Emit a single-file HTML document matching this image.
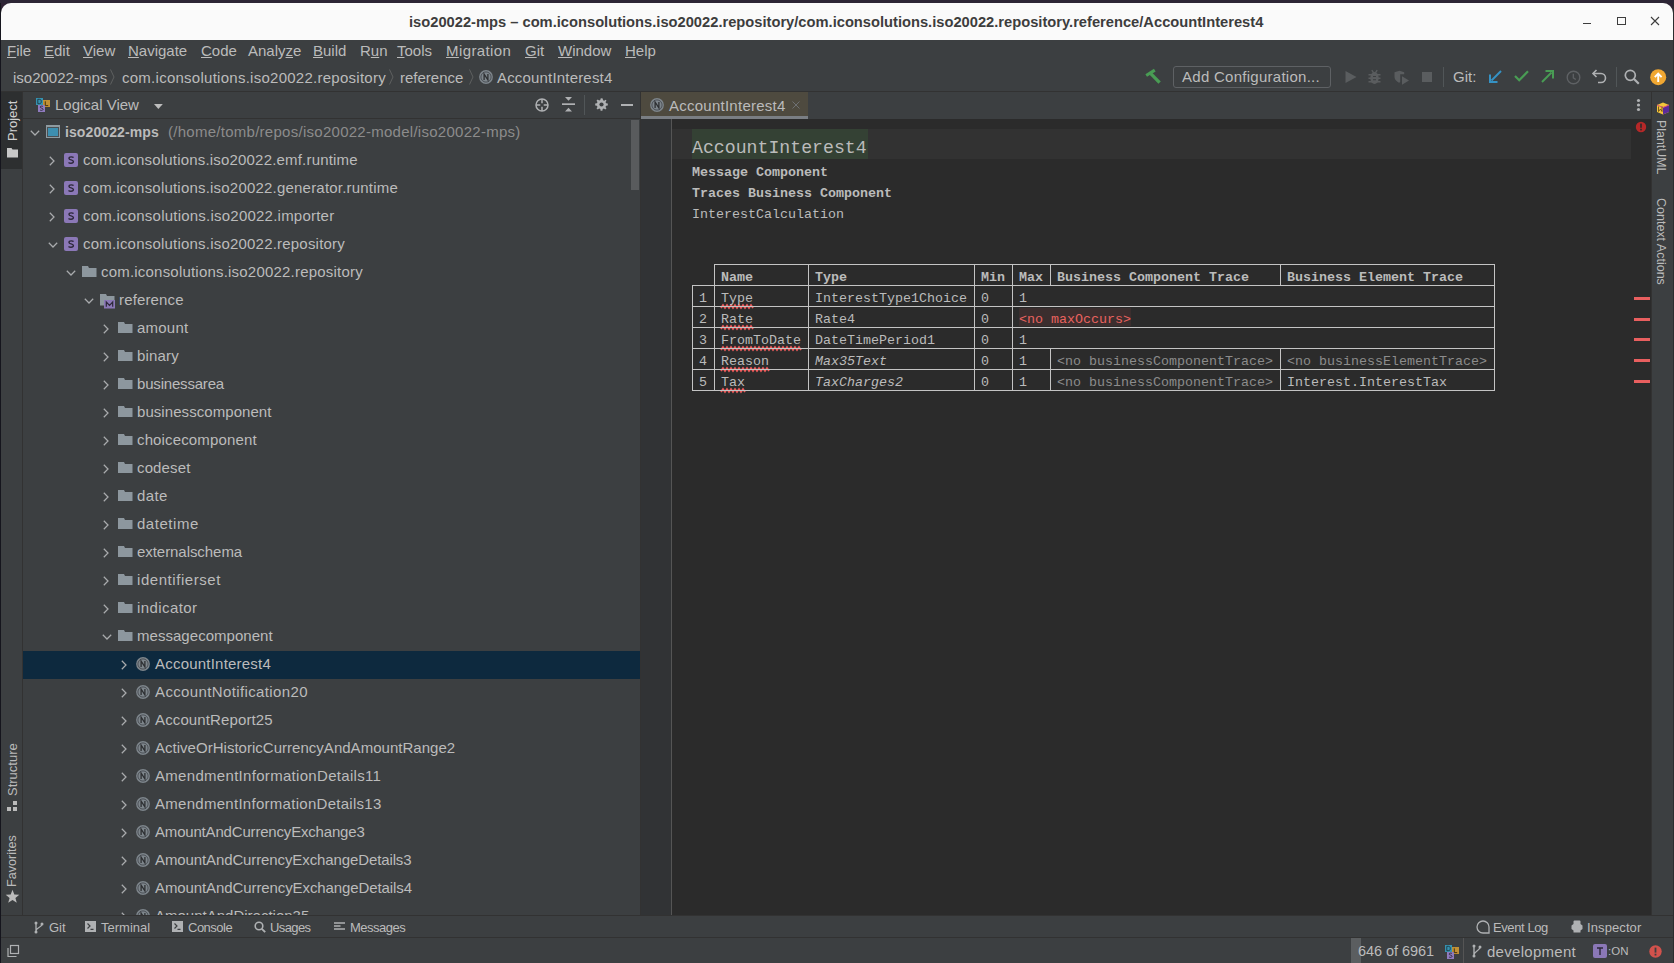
<!DOCTYPE html>
<html><head><meta charset="utf-8">
<style>
*{box-sizing:border-box}
html,body{margin:0;padding:0}
body{width:1674px;height:963px;overflow:hidden;position:relative;background:#2f2334;font-family:"Liberation Sans",sans-serif;color:#bbbbbb}
.a{position:absolute}
.t{position:absolute;white-space:pre;line-height:1}
.mono{font-family:"Liberation Mono",monospace}
.u{text-decoration:underline;text-decoration-thickness:1px;text-underline-offset:1px}
svg{position:absolute;overflow:visible}
</style></head><body>
<!-- desktop strip -->
<div class="a" style="left:0;top:0;width:1674px;height:3px;background:#2c2535"></div>
<div class="a" style="left:0;top:3px;width:1px;height:960px;background:#15151d"></div>
<div class="a" style="left:1673px;top:3px;width:1px;height:960px;background:#2a2c2e"></div>
<!-- window -->
<div class="a" style="left:1px;top:3px;width:1672px;height:960px;background:#3c3f41;border-radius:10px 10px 0 0;overflow:hidden">
  <div class="a" style="left:0;top:0;width:1672px;height:37px;background:#fafafa"></div>
</div>
<!-- title -->
<div class="t" style="left:409px;top:15px;font-size:14.7px;font-weight:bold;color:#3d3d3d">iso20022-mps – com.iconsolutions.iso20022.repository/com.iconsolutions.iso20022.repository.reference/AccountInterest4</div>
<div class="a" style="left:1583px;top:23px;width:8px;height:1px;background:#3d3d3d"></div>
<div class="a" style="left:1617px;top:17px;width:9px;height:8px;border:1px solid #3d3d3d"></div>
<svg style="left:1651px;top:17px" width="8" height="8"><path d="M0 0L8 8M8 0L0 8" stroke="#3d3d3d" stroke-width="1.1"/></svg>

<!-- MENU -->
<div id="menu">
<div class="t" style="left:7px;top:43px;font-size:15px"><span class="u">F</span>ile</div>
<div class="t" style="left:44px;top:43px;font-size:15px"><span class="u">E</span>dit</div>
<div class="t" style="left:83px;top:43px;font-size:15px"><span class="u">V</span>iew</div>
<div class="t" style="left:128px;top:43px;font-size:15px"><span class="u">N</span>avigate</div>
<div class="t" style="left:201px;top:43px;font-size:15px"><span class="u">C</span>ode</div>
<div class="t" style="left:248px;top:43px;font-size:15px">Analy<span class="u">z</span>e</div>
<div class="t" style="left:313px;top:43px;font-size:15px"><span class="u">B</span>uild</div>
<div class="t" style="left:360px;top:43px;font-size:15px">R<span class="u">u</span>n</div>
<div class="t" style="left:397px;top:43px;font-size:15px"><span class="u">T</span>ools</div>
<div class="t" style="left:446px;top:43px;font-size:15px;letter-spacing:0.4px"><span class="u">M</span>igration</div>
<div class="t" style="left:525px;top:43px;font-size:15px"><span class="u">G</span>it</div>
<div class="t" style="left:558px;top:43px;font-size:15px"><span class="u">W</span>indow</div>
<div class="t" style="left:625px;top:43px;font-size:15px"><span class="u">H</span>elp</div>
</div>

<!-- NAV BAR -->
<div class="t" style="left:13px;top:70px;font-size:15px">iso20022-mps</div>
<svg style="left:110px;top:69px" width="5" height="16"><path d="M0.5 0.5L4 8L0.5 15.5" fill="none" stroke="#5e6060" stroke-width="1"/></svg>
<div class="t" style="left:122px;top:70px;font-size:15px;letter-spacing:0.26px">com.iconsolutions.iso20022.repository</div>
<svg style="left:389px;top:69px" width="5" height="16"><path d="M0.5 0.5L4 8L0.5 15.5" fill="none" stroke="#5e6060" stroke-width="1"/></svg>
<div class="t" style="left:400px;top:70px;font-size:15px">reference</div>
<svg style="left:469px;top:69px" width="5" height="16"><path d="M0.5 0.5L4 8L0.5 15.5" fill="none" stroke="#5e6060" stroke-width="1"/></svg>
<svg style="left:479px;top:70px" width="14" height="14"><circle cx="7" cy="7" r="6.9" fill="#7d858b"/><circle cx="7" cy="7" r="5.1" fill="none" stroke="#40444a" stroke-width="0.8"/><path d="M5.1 9.9V4.1L8.9 9.9V4.1" fill="none" stroke="#2e3033" stroke-width="1.3"/></svg>
<div class="t" style="left:497px;top:70px;font-size:15px;letter-spacing:0.18px">AccountInterest4</div>

<!-- NAV TOOLBAR -->
<svg style="left:1145px;top:69px" width="17" height="16"><path d="M1.2 6.5L9.8 1.2" stroke="#499c54" stroke-width="3.2" stroke-linecap="butt"/><path d="M5.8 4.6L14.6 13.6" stroke="#499c54" stroke-width="3.3"/></svg>
<div class="a" style="left:1173px;top:66px;width:158px;height:22px;border:1px solid #5e6164;border-radius:3px"></div>
<div class="t" style="left:1182px;top:69px;font-size:15px;letter-spacing:0.27px">Add Configuration...</div>
<svg style="left:1345px;top:71px" width="12" height="12"><path d="M0.5 0L11.5 6L0.5 12Z" fill="#5a5d5f"/></svg>
<svg style="left:1368px;top:69px" width="14" height="16"><path d="M3.8 1.2L5.6 3.8M9.2 1.2L7.4 3.8" stroke="#5a5d5f" stroke-width="1.4"/><ellipse cx="6.5" cy="9" rx="4.2" ry="6" fill="#5a5d5f"/><path d="M0.5 5.8H12.5M0.5 9.3H12.5M0.5 12.8H12.5" stroke="#5a5d5f" stroke-width="1.5"/><path d="M5 7.5H8M5 10.8H8" stroke="#3c3f41" stroke-width="1.1"/></svg>
<svg style="left:1394px;top:70px" width="17" height="17"><path d="M0.5 2.2L5.5 0.8L10.2 2.2V4.2H6.2V11.8C5.8 12.5 5.2 12.8 5 12.8C3 11.8 0.5 9.8 0.5 7Z" fill="#5a5d5f"/><path d="M8 6.2L15 10.5L8 14.8Z" fill="#5a5d5f"/></svg>
<div class="a" style="left:1422px;top:72px;width:10px;height:10px;background:#5a5d5f"></div>
<div class="a" style="left:1443px;top:67px;width:1px;height:20px;background:#515658"></div>
<div class="t" style="left:1453px;top:69px;font-size:15px">Git:</div>
<svg style="left:1489px;top:70px" width="13" height="13"><path d="M12 1L2.5 10.5" stroke="#3592c4" stroke-width="2"/><path d="M1 4.5V12H8.5" fill="none" stroke="#3592c4" stroke-width="2"/></svg>
<svg style="left:1514px;top:70px" width="15" height="12"><path d="M1 6L5.2 10.2L14 1.3" fill="none" stroke="#499c54" stroke-width="2.2"/></svg>
<svg style="left:1541px;top:70px" width="13" height="13"><path d="M1 12L10.5 2.5" stroke="#499c54" stroke-width="2"/><path d="M4.5 1H12V8.5" fill="none" stroke="#499c54" stroke-width="2"/></svg>
<svg style="left:1566px;top:70px" width="15" height="15"><circle cx="7.5" cy="7.5" r="6.3" fill="none" stroke="#5e6164" stroke-width="1.4"/><path d="M7.3 3.8V7.8L9.8 9.5" fill="none" stroke="#5e6164" stroke-width="1.3"/></svg>
<svg style="left:1592px;top:69px" width="15" height="15"><path d="M4.5 1L1 4.5L4.5 8" fill="none" stroke="#afb1b3" stroke-width="1.6"/><path d="M1.5 4.5H9C11.5 4.5 13.5 6.5 13.5 9C13.5 11.5 11.5 13.5 9 13.5H6" fill="none" stroke="#afb1b3" stroke-width="1.6"/></svg>
<div class="a" style="left:1616px;top:67px;width:1px;height:20px;background:#515658"></div>
<svg style="left:1624px;top:69px" width="16" height="16"><circle cx="6.3" cy="6.3" r="5" fill="none" stroke="#afb1b3" stroke-width="1.7"/><path d="M9.8 9.8L14.8 14.8" stroke="#afb1b3" stroke-width="2.2"/></svg>
<svg style="left:1650px;top:69px" width="17" height="17"><circle cx="8.2" cy="8.2" r="8" fill="#f0a732"/><path d="M8.2 13V5M4.8 8.2L8.2 4.6L11.6 8.2" fill="none" stroke="#ffffff" stroke-width="1.9"/></svg>
<div class="a" style="left:1px;top:91px;width:1672px;height:1px;background:#323232"></div>

<!-- LEFT STRIPE -->
<div class="a" style="left:1px;top:92px;width:21px;height:77px;background:#2d2f30"></div>
<div class="a" style="left:22px;top:92px;width:1px;height:823px;background:#323232"></div>
<div class="t" style="left:6px;top:141px;font-size:13px;color:#d0d0d0;transform:rotate(-90deg);transform-origin:0 0">Project</div>
<svg style="left:7px;top:148px" width="12" height="10"><path d="M0 0H4.5L5.5 1.5H11V9.5H0Z" fill="#c8c8c8"/></svg>
<div class="t" style="left:6px;top:796px;font-size:13px;transform:rotate(-90deg);transform-origin:0 0">Structure</div>
<svg style="left:7px;top:801px" width="11" height="11"><rect x="0" y="6" width="4" height="4" fill="#bbbbbb"/><rect x="6" y="6" width="4" height="4" fill="#bbbbbb"/><rect x="6" y="0" width="4" height="4" fill="#bbbbbb"/></svg>
<div class="t" style="left:6px;top:887px;font-size:12.6px;transform:rotate(-90deg);transform-origin:0 0">Favorites</div>
<svg style="left:5px;top:889px" width="15" height="15"><path d="M7.5 0.8L9.3 5.6L14.3 5.8L10.4 8.9L11.8 13.8L7.5 11L3.2 13.8L4.6 8.9L0.7 5.8L5.7 5.6Z" fill="#bbbbbb"/></svg>

<!-- PROJECT PANEL header -->
<div class="a" style="left:23px;top:118px;width:617px;height:1px;background:#323232"></div>
<div class="t" style="left:55px;top:97px;font-size:15px">Logical View</div>
<svg style="left:36px;top:98px" width="15" height="14"><rect x="0" y="0" width="7" height="7" fill="#3592b0"/><rect x="7" y="2" width="7" height="7" fill="#c09034"/><rect x="2" y="7" width="7" height="7" fill="#8f7bbf"/>
<path d="M1.8 1.3V5.7H3.3C4.8 5.7 5.3 4.8 5.3 3.5C5.3 2.2 4.8 1.3 3.3 1.3Z" fill="none" stroke="#1f3540" stroke-width="0.9"/>
<path d="M9.3 3.3V7.6H12.2" fill="none" stroke="#3a2a10" stroke-width="0.9"/>
<path d="M7 8.5C6.5 8.2 6 8.1 5.5 8.1C4.7 8.1 4.2 8.5 4.2 9.1C4.2 10.4 7 9.8 7 11.3C7 12 6.4 12.4 5.5 12.4C4.9 12.4 4.3 12.2 4 11.9" fill="none" stroke="#2d283a" stroke-width="0.9"/></svg>
<svg style="left:535px;top:98px" width="15" height="15"><circle cx="7" cy="7" r="6" fill="none" stroke="#afb1b3" stroke-width="1.5"/><path d="M7 1V5.3M7 8.7V13M1 7H5.3M8.7 7H13" stroke="#afb1b3" stroke-width="1.5"/></svg>
<svg style="left:562px;top:97px" width="13" height="15"><path d="M3 0H10L6.5 3.8Z M3 14.5H10L6.5 10.7Z" fill="#afb1b3"/><rect x="0" y="6.3" width="13" height="1.7" fill="#afb1b3"/></svg>
<div class="a" style="left:584px;top:95px;width:1px;height:20px;background:#515658"></div>
<svg style="left:595px;top:98px" width="13" height="13"><path d="M6.5 0.3L7.7 0.5L8 2.2L9.2 2.8L10.6 1.8L11.5 2.7L10.5 4.1L11.1 5.3L12.8 5.6L12.8 7.4L11.1 7.7L10.5 8.9L11.5 10.3L10.3 11.4L8.9 10.4L7.7 10.9L7.4 12.7L5.6 12.7L5.3 10.9L4.1 10.4L2.7 11.4L1.5 10.3L2.5 8.9L1.9 7.7L0.2 7.4L0.2 5.6L1.9 5.3L2.5 4.1L1.5 2.7L2.7 1.6L4.1 2.6L5.3 2.1L5.6 0.4Z" fill="#afb1b3"/><circle cx="6.5" cy="6.5" r="2.1" fill="#3c3f41"/></svg>
<div class="a" style="left:621px;top:104px;width:12px;height:2px;background:#afb1b3"></div>
<svg style="left:153.5px;top:104px" width="10" height="6"><path d="M0 0H8.8L4.4 5Z" fill="#bdbdbd"/></svg>

<div id="tree" class="a" style="left:23px;top:119px;width:617px;height:796px;overflow:hidden"><div class="a" style="left:-23px;top:-119px;width:1674px;height:963px">
<svg style="left:29.799999999999997px;top:129.5px" width="10" height="6"><path d="M0.8 0.8L5 5L9.2 0.8" fill="none" stroke="#a9abad" stroke-width="1.25"/></svg>
<div class="a" style="left:46px;top:125px;width:14px;height:13px;background:#8f9ba1"></div><div class="a" style="left:47px;top:127px;width:12px;height:10px;background:#4a5156"></div><div class="a" style="left:48px;top:128px;width:10px;height:8px;background:#3d8fb0"></div>
<div class="t" style="left:65px;top:125px;font-size:14px;font-weight:bold;color:#bbbbbb;letter-spacing:0.099px">iso20022-mps</div>
<div class="t" style="left:168px;top:124px;font-size:15px;color:#8c8c8c;letter-spacing:0.27px">(/home/tomb/repos/iso20022-model/iso20022-mps)</div>
<svg style="left:49.2px;top:156.0px" width="6" height="10"><path d="M0.8 0.8L5 5L0.8 9.2" fill="none" stroke="#a9abad" stroke-width="1.25"/></svg>
<div class="a" style="left:64px;top:153px;width:14px;height:14px;background:#8b78b7;border-radius:2px"></div><svg style="left:64px;top:153px" width="14" height="14"><path d="M9.6 4.6C9 4 8.2 3.9 7.2 3.9C5.8 3.9 5 4.5 5 5.4C5 7.4 9.4 6.3 9.4 8.5C9.4 9.6 8.4 10.2 7 10.2C5.9 10.2 5 9.9 4.5 9.4" fill="none" stroke="#2d283a" stroke-width="1.4"/></svg>
<div class="t" style="left:83px;top:152px;font-size:15px;letter-spacing:0.188px">com.iconsolutions.iso20022.emf.runtime</div>
<svg style="left:49.2px;top:184.0px" width="6" height="10"><path d="M0.8 0.8L5 5L0.8 9.2" fill="none" stroke="#a9abad" stroke-width="1.25"/></svg>
<div class="a" style="left:64px;top:181px;width:14px;height:14px;background:#8b78b7;border-radius:2px"></div><svg style="left:64px;top:181px" width="14" height="14"><path d="M9.6 4.6C9 4 8.2 3.9 7.2 3.9C5.8 3.9 5 4.5 5 5.4C5 7.4 9.4 6.3 9.4 8.5C9.4 9.6 8.4 10.2 7 10.2C5.9 10.2 5 9.9 4.5 9.4" fill="none" stroke="#2d283a" stroke-width="1.4"/></svg>
<div class="t" style="left:83px;top:180px;font-size:15px;letter-spacing:0.204px">com.iconsolutions.iso20022.generator.runtime</div>
<svg style="left:49.2px;top:212.0px" width="6" height="10"><path d="M0.8 0.8L5 5L0.8 9.2" fill="none" stroke="#a9abad" stroke-width="1.25"/></svg>
<div class="a" style="left:64px;top:209px;width:14px;height:14px;background:#8b78b7;border-radius:2px"></div><svg style="left:64px;top:209px" width="14" height="14"><path d="M9.6 4.6C9 4 8.2 3.9 7.2 3.9C5.8 3.9 5 4.5 5 5.4C5 7.4 9.4 6.3 9.4 8.5C9.4 9.6 8.4 10.2 7 10.2C5.9 10.2 5 9.9 4.5 9.4" fill="none" stroke="#2d283a" stroke-width="1.4"/></svg>
<div class="t" style="left:83px;top:208px;font-size:15px;letter-spacing:0.227px">com.iconsolutions.iso20022.importer</div>
<svg style="left:47.8px;top:241.5px" width="10" height="6"><path d="M0.8 0.8L5 5L9.2 0.8" fill="none" stroke="#a9abad" stroke-width="1.25"/></svg>
<div class="a" style="left:64px;top:237px;width:14px;height:14px;background:#8b78b7;border-radius:2px"></div><svg style="left:64px;top:237px" width="14" height="14"><path d="M9.6 4.6C9 4 8.2 3.9 7.2 3.9C5.8 3.9 5 4.5 5 5.4C5 7.4 9.4 6.3 9.4 8.5C9.4 9.6 8.4 10.2 7 10.2C5.9 10.2 5 9.9 4.5 9.4" fill="none" stroke="#2d283a" stroke-width="1.4"/></svg>
<div class="t" style="left:83px;top:236px;font-size:15px;letter-spacing:0.208px">com.iconsolutions.iso20022.repository</div>
<svg style="left:65.8px;top:269.5px" width="10" height="6"><path d="M0.8 0.8L5 5L9.2 0.8" fill="none" stroke="#a9abad" stroke-width="1.25"/></svg>
<svg style="left:82px;top:266px" width="15" height="12"><path d="M0 0H6L7 2H14.5V10.9H0Z" fill="#8d979e"/></svg>
<div class="t" style="left:101px;top:264px;font-size:15px;letter-spacing:0.205px">com.iconsolutions.iso20022.repository</div>
<svg style="left:83.8px;top:297.5px" width="10" height="6"><path d="M0.8 0.8L5 5L9.2 0.8" fill="none" stroke="#a9abad" stroke-width="1.25"/></svg>
<svg style="left:100px;top:294px" width="16" height="15"><path d="M0 0H6L7 2H14.5V6H4V11.5H0Z" fill="#8d979e"/><rect x="4" y="6" width="11" height="8.5" fill="#8b78b7"/><path d="M6.3 12.8V8L9.5 11.3L12.7 8V12.8" fill="none" stroke="#2d283a" stroke-width="1.2"/></svg>
<div class="t" style="left:119px;top:292px;font-size:15px;letter-spacing:0.147px">reference</div>
<svg style="left:103.2px;top:324.0px" width="6" height="10"><path d="M0.8 0.8L5 5L0.8 9.2" fill="none" stroke="#a9abad" stroke-width="1.25"/></svg>
<svg style="left:118px;top:322px" width="15" height="12"><path d="M0 0H6L7 2H14.5V10.9H0Z" fill="#8d979e"/></svg>
<div class="t" style="left:137px;top:320px;font-size:15px;letter-spacing:0.226px">amount</div>
<svg style="left:103.2px;top:352.0px" width="6" height="10"><path d="M0.8 0.8L5 5L0.8 9.2" fill="none" stroke="#a9abad" stroke-width="1.25"/></svg>
<svg style="left:118px;top:350px" width="15" height="12"><path d="M0 0H6L7 2H14.5V10.9H0Z" fill="#8d979e"/></svg>
<div class="t" style="left:137px;top:348px;font-size:15px;letter-spacing:0.157px">binary</div>
<svg style="left:103.2px;top:380.0px" width="6" height="10"><path d="M0.8 0.8L5 5L0.8 9.2" fill="none" stroke="#a9abad" stroke-width="1.25"/></svg>
<svg style="left:118px;top:378px" width="15" height="12"><path d="M0 0H6L7 2H14.5V10.9H0Z" fill="#8d979e"/></svg>
<div class="t" style="left:137px;top:376px;font-size:15px;letter-spacing:-0.186px">businessarea</div>
<svg style="left:103.2px;top:408.0px" width="6" height="10"><path d="M0.8 0.8L5 5L0.8 9.2" fill="none" stroke="#a9abad" stroke-width="1.25"/></svg>
<svg style="left:118px;top:406px" width="15" height="12"><path d="M0 0H6L7 2H14.5V10.9H0Z" fill="#8d979e"/></svg>
<div class="t" style="left:137px;top:404px;font-size:15px;letter-spacing:0.063px">businesscomponent</div>
<svg style="left:103.2px;top:436.0px" width="6" height="10"><path d="M0.8 0.8L5 5L0.8 9.2" fill="none" stroke="#a9abad" stroke-width="1.25"/></svg>
<svg style="left:118px;top:434px" width="15" height="12"><path d="M0 0H6L7 2H14.5V10.9H0Z" fill="#8d979e"/></svg>
<div class="t" style="left:137px;top:432px;font-size:15px;letter-spacing:0.141px">choicecomponent</div>
<svg style="left:103.2px;top:464.0px" width="6" height="10"><path d="M0.8 0.8L5 5L0.8 9.2" fill="none" stroke="#a9abad" stroke-width="1.25"/></svg>
<svg style="left:118px;top:462px" width="15" height="12"><path d="M0 0H6L7 2H14.5V10.9H0Z" fill="#8d979e"/></svg>
<div class="t" style="left:137px;top:460px;font-size:15px;letter-spacing:0.136px">codeset</div>
<svg style="left:103.2px;top:492.0px" width="6" height="10"><path d="M0.8 0.8L5 5L0.8 9.2" fill="none" stroke="#a9abad" stroke-width="1.25"/></svg>
<svg style="left:118px;top:490px" width="15" height="12"><path d="M0 0H6L7 2H14.5V10.9H0Z" fill="#8d979e"/></svg>
<div class="t" style="left:137px;top:488px;font-size:15px;letter-spacing:0.349px">date</div>
<svg style="left:103.2px;top:520.0px" width="6" height="10"><path d="M0.8 0.8L5 5L0.8 9.2" fill="none" stroke="#a9abad" stroke-width="1.25"/></svg>
<svg style="left:118px;top:518px" width="15" height="12"><path d="M0 0H6L7 2H14.5V10.9H0Z" fill="#8d979e"/></svg>
<div class="t" style="left:137px;top:516px;font-size:15px;letter-spacing:0.532px">datetime</div>
<svg style="left:103.2px;top:548.0px" width="6" height="10"><path d="M0.8 0.8L5 5L0.8 9.2" fill="none" stroke="#a9abad" stroke-width="1.25"/></svg>
<svg style="left:118px;top:546px" width="15" height="12"><path d="M0 0H6L7 2H14.5V10.9H0Z" fill="#8d979e"/></svg>
<div class="t" style="left:137px;top:544px;font-size:15px;letter-spacing:-0.056px">externalschema</div>
<svg style="left:103.2px;top:576.0px" width="6" height="10"><path d="M0.8 0.8L5 5L0.8 9.2" fill="none" stroke="#a9abad" stroke-width="1.25"/></svg>
<svg style="left:118px;top:574px" width="15" height="12"><path d="M0 0H6L7 2H14.5V10.9H0Z" fill="#8d979e"/></svg>
<div class="t" style="left:137px;top:572px;font-size:15px;letter-spacing:0.552px">identifierset</div>
<svg style="left:103.2px;top:604.0px" width="6" height="10"><path d="M0.8 0.8L5 5L0.8 9.2" fill="none" stroke="#a9abad" stroke-width="1.25"/></svg>
<svg style="left:118px;top:602px" width="15" height="12"><path d="M0 0H6L7 2H14.5V10.9H0Z" fill="#8d979e"/></svg>
<div class="t" style="left:137px;top:600px;font-size:15px;letter-spacing:0.422px">indicator</div>
<svg style="left:101.8px;top:633.5px" width="10" height="6"><path d="M0.8 0.8L5 5L9.2 0.8" fill="none" stroke="#a9abad" stroke-width="1.25"/></svg>
<svg style="left:118px;top:630px" width="15" height="12"><path d="M0 0H6L7 2H14.5V10.9H0Z" fill="#8d979e"/></svg>
<div class="t" style="left:137px;top:628px;font-size:15px;letter-spacing:0.038px">messagecomponent</div>
<div class="a" style="left:23px;top:651px;width:617px;height:28px;background:#0d293e"></div>
<svg style="left:121.2px;top:660.0px" width="6" height="10"><path d="M0.8 0.8L5 5L0.8 9.2" fill="none" stroke="#a9abad" stroke-width="1.25"/></svg>
<svg style="left:136px;top:657px" width="14" height="14"><circle cx="7" cy="7" r="6.9" fill="#7d858b"/><circle cx="7" cy="7" r="5.1" fill="none" stroke="#40444a" stroke-width="0.8"/><path d="M5.1 9.9V4.1L8.9 9.9V4.1" fill="none" stroke="#2e3033" stroke-width="1.3"/></svg>
<div class="t" style="left:155px;top:656px;font-size:15px;letter-spacing:0.214px">AccountInterest4</div>
<svg style="left:121.2px;top:688.0px" width="6" height="10"><path d="M0.8 0.8L5 5L0.8 9.2" fill="none" stroke="#a9abad" stroke-width="1.25"/></svg>
<svg style="left:136px;top:685px" width="14" height="14"><circle cx="7" cy="7" r="6.9" fill="#7d858b"/><circle cx="7" cy="7" r="5.1" fill="none" stroke="#40444a" stroke-width="0.8"/><path d="M5.1 9.9V4.1L8.9 9.9V4.1" fill="none" stroke="#2e3033" stroke-width="1.3"/></svg>
<div class="t" style="left:155px;top:684px;font-size:15px;letter-spacing:0.372px">AccountNotification20</div>
<svg style="left:121.2px;top:716.0px" width="6" height="10"><path d="M0.8 0.8L5 5L0.8 9.2" fill="none" stroke="#a9abad" stroke-width="1.25"/></svg>
<svg style="left:136px;top:713px" width="14" height="14"><circle cx="7" cy="7" r="6.9" fill="#7d858b"/><circle cx="7" cy="7" r="5.1" fill="none" stroke="#40444a" stroke-width="0.8"/><path d="M5.1 9.9V4.1L8.9 9.9V4.1" fill="none" stroke="#2e3033" stroke-width="1.3"/></svg>
<div class="t" style="left:155px;top:712px;font-size:15px;letter-spacing:0.126px">AccountReport25</div>
<svg style="left:121.2px;top:744.0px" width="6" height="10"><path d="M0.8 0.8L5 5L0.8 9.2" fill="none" stroke="#a9abad" stroke-width="1.25"/></svg>
<svg style="left:136px;top:741px" width="14" height="14"><circle cx="7" cy="7" r="6.9" fill="#7d858b"/><circle cx="7" cy="7" r="5.1" fill="none" stroke="#40444a" stroke-width="0.8"/><path d="M5.1 9.9V4.1L8.9 9.9V4.1" fill="none" stroke="#2e3033" stroke-width="1.3"/></svg>
<div class="t" style="left:155px;top:740px;font-size:15px;letter-spacing:0.021px">ActiveOrHistoricCurrencyAndAmountRange2</div>
<svg style="left:121.2px;top:772.0px" width="6" height="10"><path d="M0.8 0.8L5 5L0.8 9.2" fill="none" stroke="#a9abad" stroke-width="1.25"/></svg>
<svg style="left:136px;top:769px" width="14" height="14"><circle cx="7" cy="7" r="6.9" fill="#7d858b"/><circle cx="7" cy="7" r="5.1" fill="none" stroke="#40444a" stroke-width="0.8"/><path d="M5.1 9.9V4.1L8.9 9.9V4.1" fill="none" stroke="#2e3033" stroke-width="1.3"/></svg>
<div class="t" style="left:155px;top:768px;font-size:15px;letter-spacing:0.305px">AmendmentInformationDetails11</div>
<svg style="left:121.2px;top:800.0px" width="6" height="10"><path d="M0.8 0.8L5 5L0.8 9.2" fill="none" stroke="#a9abad" stroke-width="1.25"/></svg>
<svg style="left:136px;top:797px" width="14" height="14"><circle cx="7" cy="7" r="6.9" fill="#7d858b"/><circle cx="7" cy="7" r="5.1" fill="none" stroke="#40444a" stroke-width="0.8"/><path d="M5.1 9.9V4.1L8.9 9.9V4.1" fill="none" stroke="#2e3033" stroke-width="1.3"/></svg>
<div class="t" style="left:155px;top:796px;font-size:15px;letter-spacing:0.281px">AmendmentInformationDetails13</div>
<svg style="left:121.2px;top:828.0px" width="6" height="10"><path d="M0.8 0.8L5 5L0.8 9.2" fill="none" stroke="#a9abad" stroke-width="1.25"/></svg>
<svg style="left:136px;top:825px" width="14" height="14"><circle cx="7" cy="7" r="6.9" fill="#7d858b"/><circle cx="7" cy="7" r="5.1" fill="none" stroke="#40444a" stroke-width="0.8"/><path d="M5.1 9.9V4.1L8.9 9.9V4.1" fill="none" stroke="#2e3033" stroke-width="1.3"/></svg>
<div class="t" style="left:155px;top:824px;font-size:15px;letter-spacing:-0.181px">AmountAndCurrencyExchange3</div>
<svg style="left:121.2px;top:856.0px" width="6" height="10"><path d="M0.8 0.8L5 5L0.8 9.2" fill="none" stroke="#a9abad" stroke-width="1.25"/></svg>
<svg style="left:136px;top:853px" width="14" height="14"><circle cx="7" cy="7" r="6.9" fill="#7d858b"/><circle cx="7" cy="7" r="5.1" fill="none" stroke="#40444a" stroke-width="0.8"/><path d="M5.1 9.9V4.1L8.9 9.9V4.1" fill="none" stroke="#2e3033" stroke-width="1.3"/></svg>
<div class="t" style="left:155px;top:852px;font-size:15px;letter-spacing:-0.111px">AmountAndCurrencyExchangeDetails3</div>
<svg style="left:121.2px;top:884.0px" width="6" height="10"><path d="M0.8 0.8L5 5L0.8 9.2" fill="none" stroke="#a9abad" stroke-width="1.25"/></svg>
<svg style="left:136px;top:881px" width="14" height="14"><circle cx="7" cy="7" r="6.9" fill="#7d858b"/><circle cx="7" cy="7" r="5.1" fill="none" stroke="#40444a" stroke-width="0.8"/><path d="M5.1 9.9V4.1L8.9 9.9V4.1" fill="none" stroke="#2e3033" stroke-width="1.3"/></svg>
<div class="t" style="left:155px;top:880px;font-size:15px;letter-spacing:-0.096px">AmountAndCurrencyExchangeDetails4</div>
<svg style="left:121.2px;top:912.0px" width="6" height="10"><path d="M0.8 0.8L5 5L0.8 9.2" fill="none" stroke="#a9abad" stroke-width="1.25"/></svg>
<svg style="left:136px;top:909px" width="14" height="14"><circle cx="7" cy="7" r="6.9" fill="#7d858b"/><circle cx="7" cy="7" r="5.1" fill="none" stroke="#40444a" stroke-width="0.8"/><path d="M5.1 9.9V4.1L8.9 9.9V4.1" fill="none" stroke="#2e3033" stroke-width="1.3"/></svg>
<div class="t" style="left:155px;top:908px;font-size:15px;letter-spacing:0px">AmountAndDirection35</div>
</div></div>
<!-- tree scrollbar -->
<div class="a" style="left:631px;top:120px;width:8px;height:70px;background:#595b5d"></div>
<div class="a" style="left:640px;top:92px;width:1px;height:823px;background:#323232"></div>

<!-- EDITOR -->
<div class="a" style="left:641px;top:92px;width:1010px;height:26px;background:#3c3f41"></div>
<div class="a" style="left:641px;top:92px;width:167px;height:24px;background:#4e4a3f"></div>
<div class="a" style="left:641px;top:116px;width:167px;height:3px;background:#7a7e83"></div>
<div class="t" style="left:669px;top:98px;font-size:15px;letter-spacing:0.25px">AccountInterest4</div>
<svg style="left:650px;top:98px" width="14" height="14"><circle cx="7" cy="7" r="6.9" fill="#7d858b"/><circle cx="7" cy="7" r="5.1" fill="none" stroke="#40444a" stroke-width="0.8"/><path d="M5.1 9.9V4.1L8.9 9.9V4.1" fill="none" stroke="#2e3033" stroke-width="1.3"/></svg>
<svg style="left:792px;top:101px" width="8" height="8"><path d="M0.5 0.5L7.5 7.5M7.5 0.5L0.5 7.5" stroke="#6e7072" stroke-width="1"/></svg>
<div class="a" style="left:641px;top:119px;width:30px;height:796px;background:#313335"></div>
<div class="a" style="left:671px;top:119px;width:1px;height:796px;background:#555555"></div>
<div class="a" style="left:672px;top:119px;width:979px;height:796px;background:#2b2b2b"></div>
<div class="a" style="left:672px;top:129px;width:959px;height:30px;background:#323232"></div>
<div class="a" style="left:692px;top:129px;width:176px;height:30px;background:#344134"></div>
<div class="t mono" style="left:692px;top:139px;font-size:18.2px;color:#bbbbbb">AccountInterest4</div>
<div class="t mono" style="left:692px;top:166px;font-size:13.33px;font-weight:bold;color:#bbbbbb">Message Component</div>
<div class="t mono" style="left:692px;top:187px;font-size:13.33px;font-weight:bold;color:#bbbbbb">Traces Business Component</div>
<div class="t mono" style="left:692px;top:208px;font-size:13.33px;color:#bbbbbb">InterestCalculation</div>
<svg style="left:1635px;top:121px" width="12" height="12"><circle cx="6" cy="6" r="5.2" fill="#b52828"/><rect x="5.2" y="2.6" width="1.6" height="4.2" fill="#2b2b2b"/><rect x="5.2" y="7.8" width="1.6" height="1.6" fill="#2b2b2b"/></svg>
<div class="a" style="left:1634px;top:297px;width:16px;height:3px;background:#e85f5f"></div>
<div class="a" style="left:1634px;top:318px;width:16px;height:3px;background:#e85f5f"></div>
<div class="a" style="left:1634px;top:338px;width:16px;height:3px;background:#e85f5f"></div>
<div class="a" style="left:1634px;top:359px;width:16px;height:3px;background:#e85f5f"></div>
<div class="a" style="left:1634px;top:380px;width:16px;height:3px;background:#e85f5f"></div>
<svg style="left:721px;top:304px" width="34" height="5"><polyline points="0,3.9 2,1.1 4,3.9 6,1.1 8,3.9 10,1.1 12,3.9 14,1.1 16,3.9 18,1.1 20,3.9 22,1.1 24,3.9 26,1.1 28,3.9 30,1.1 32,3.9" fill="none" stroke="#f25d5d" stroke-width="1.8"/></svg>
<svg style="left:721px;top:325px" width="34" height="5"><polyline points="0,3.9 2,1.1 4,3.9 6,1.1 8,3.9 10,1.1 12,3.9 14,1.1 16,3.9 18,1.1 20,3.9 22,1.1 24,3.9 26,1.1 28,3.9 30,1.1 32,3.9" fill="none" stroke="#f25d5d" stroke-width="1.8"/></svg>
<svg style="left:721px;top:346px" width="82" height="5"><polyline points="0,3.9 2,1.1 4,3.9 6,1.1 8,3.9 10,1.1 12,3.9 14,1.1 16,3.9 18,1.1 20,3.9 22,1.1 24,3.9 26,1.1 28,3.9 30,1.1 32,3.9 34,1.1 36,3.9 38,1.1 40,3.9 42,1.1 44,3.9 46,1.1 48,3.9 50,1.1 52,3.9 54,1.1 56,3.9 58,1.1 60,3.9 62,1.1 64,3.9 66,1.1 68,3.9 70,1.1 72,3.9 74,1.1 76,3.9 78,1.1 80,3.9" fill="none" stroke="#f25d5d" stroke-width="1.8"/></svg>
<svg style="left:721px;top:367px" width="50" height="5"><polyline points="0,3.9 2,1.1 4,3.9 6,1.1 8,3.9 10,1.1 12,3.9 14,1.1 16,3.9 18,1.1 20,3.9 22,1.1 24,3.9 26,1.1 28,3.9 30,1.1 32,3.9 34,1.1 36,3.9 38,1.1 40,3.9 42,1.1 44,3.9 46,1.1 48,3.9" fill="none" stroke="#f25d5d" stroke-width="1.8"/></svg>
<svg style="left:721px;top:388px" width="26" height="5"><polyline points="0,3.9 2,1.1 4,3.9 6,1.1 8,3.9 10,1.1 12,3.9 14,1.1 16,3.9 18,1.1 20,3.9 22,1.1 24,3.9" fill="none" stroke="#f25d5d" stroke-width="1.8"/></svg>
<div class="a" style="left:714px;top:264px;width:781px;height:1px;background:#c4c4c4"></div>
<div class="a" style="left:692px;top:285px;width:803px;height:1px;background:#c4c4c4"></div>
<div class="a" style="left:692px;top:306px;width:803px;height:1px;background:#c4c4c4"></div>
<div class="a" style="left:692px;top:327px;width:803px;height:1px;background:#c4c4c4"></div>
<div class="a" style="left:692px;top:348px;width:803px;height:1px;background:#c4c4c4"></div>
<div class="a" style="left:692px;top:369px;width:803px;height:1px;background:#c4c4c4"></div>
<div class="a" style="left:692px;top:390px;width:803px;height:1px;background:#c4c4c4"></div>
<div class="a" style="left:692px;top:285px;width:1px;height:106px;background:#c4c4c4"></div>
<div class="a" style="left:714px;top:264px;width:1px;height:127px;background:#c4c4c4"></div>
<div class="a" style="left:808px;top:264px;width:1px;height:127px;background:#c4c4c4"></div>
<div class="a" style="left:974px;top:264px;width:1px;height:127px;background:#c4c4c4"></div>
<div class="a" style="left:1012px;top:264px;width:1px;height:127px;background:#c4c4c4"></div>
<div class="a" style="left:1494px;top:264px;width:1px;height:127px;background:#c4c4c4"></div>
<div class="a" style="left:1050px;top:264px;width:1px;height:22px;background:#c4c4c4"></div>
<div class="a" style="left:1050px;top:348px;width:1px;height:43px;background:#c4c4c4"></div>
<div class="a" style="left:1280px;top:264px;width:1px;height:22px;background:#c4c4c4"></div>
<div class="a" style="left:1280px;top:348px;width:1px;height:43px;background:#c4c4c4"></div>
<div class="t mono" style="left:721px;top:271px;font-size:13.33px;color:#bbbbbb;font-weight:bold">Name</div>
<div class="t mono" style="left:815px;top:271px;font-size:13.33px;color:#bbbbbb;font-weight:bold">Type</div>
<div class="t mono" style="left:981px;top:271px;font-size:13.33px;color:#bbbbbb;font-weight:bold">Min</div>
<div class="t mono" style="left:1019px;top:271px;font-size:13.33px;color:#bbbbbb;font-weight:bold">Max</div>
<div class="t mono" style="left:1057px;top:271px;font-size:13.33px;color:#bbbbbb;font-weight:bold">Business Component Trace</div>
<div class="t mono" style="left:1287px;top:271px;font-size:13.33px;color:#bbbbbb;font-weight:bold">Business Element Trace</div>
<div class="t mono" style="left:699px;top:292px;font-size:13.33px;color:#bbbbbb;">1</div>
<div class="t mono" style="left:721px;top:292px;font-size:13.33px;color:#bbbbbb;">Type</div>
<div class="t mono" style="left:815px;top:292px;font-size:13.33px;color:#bbbbbb;">InterestType1Choice</div>
<div class="t mono" style="left:981px;top:292px;font-size:13.33px;color:#bbbbbb;">0</div>
<div class="t mono" style="left:1019px;top:292px;font-size:13.33px;color:#bbbbbb;">1</div>
<div class="t mono" style="left:699px;top:313px;font-size:13.33px;color:#bbbbbb;">2</div>
<div class="t mono" style="left:721px;top:313px;font-size:13.33px;color:#bbbbbb;">Rate</div>
<div class="t mono" style="left:815px;top:313px;font-size:13.33px;color:#bbbbbb;">Rate4</div>
<div class="t mono" style="left:981px;top:313px;font-size:13.33px;color:#bbbbbb;">0</div>
<div class="a" style="left:1019px;top:308px;width:112px;height:18px;background:#3b2e2e"></div>
<div class="t mono" style="left:1019px;top:313px;font-size:13.33px;color:#bbbbbb;color:#e8625f">&lt;no maxOccurs&gt;</div>
<div class="t mono" style="left:699px;top:334px;font-size:13.33px;color:#bbbbbb;">3</div>
<div class="t mono" style="left:721px;top:334px;font-size:13.33px;color:#bbbbbb;">FromToDate</div>
<div class="t mono" style="left:815px;top:334px;font-size:13.33px;color:#bbbbbb;">DateTimePeriod1</div>
<div class="t mono" style="left:981px;top:334px;font-size:13.33px;color:#bbbbbb;">0</div>
<div class="t mono" style="left:1019px;top:334px;font-size:13.33px;color:#bbbbbb;">1</div>
<div class="t mono" style="left:699px;top:355px;font-size:13.33px;color:#bbbbbb;">4</div>
<div class="t mono" style="left:721px;top:355px;font-size:13.33px;color:#bbbbbb;">Reason</div>
<div class="t mono" style="left:815px;top:355px;font-size:13.33px;color:#bbbbbb;"><i>Max35Text</i></div>
<div class="t mono" style="left:981px;top:355px;font-size:13.33px;color:#bbbbbb;">0</div>
<div class="t mono" style="left:1019px;top:355px;font-size:13.33px;color:#bbbbbb;">1</div>
<div class="t mono" style="left:1057px;top:355px;font-size:13.33px;color:#bbbbbb;color:#8c8c8c">&lt;no businessComponentTrace&gt;</div>
<div class="t mono" style="left:1287px;top:355px;font-size:13.33px;color:#bbbbbb;color:#8c8c8c">&lt;no businessElementTrace&gt;</div>
<div class="t mono" style="left:699px;top:376px;font-size:13.33px;color:#bbbbbb;">5</div>
<div class="t mono" style="left:721px;top:376px;font-size:13.33px;color:#bbbbbb;">Tax</div>
<div class="t mono" style="left:815px;top:376px;font-size:13.33px;color:#bbbbbb;"><i>TaxCharges2</i></div>
<div class="t mono" style="left:981px;top:376px;font-size:13.33px;color:#bbbbbb;">0</div>
<div class="t mono" style="left:1019px;top:376px;font-size:13.33px;color:#bbbbbb;">1</div>
<div class="t mono" style="left:1057px;top:376px;font-size:13.33px;color:#bbbbbb;color:#8c8c8c">&lt;no businessComponentTrace&gt;</div>
<div class="t mono" style="left:1287px;top:376px;font-size:13.33px;color:#bbbbbb;">Interest.InterestTax</div>

<!-- RIGHT STRIPE -->
<div class="a" style="left:1651px;top:92px;width:1px;height:823px;background:#323232"></div>
<svg style="left:1636px;top:98px" width="5" height="14"><circle cx="2.5" cy="2.5" r="1.6" fill="#afb1b3"/><circle cx="2.5" cy="7" r="1.6" fill="#afb1b3"/><circle cx="2.5" cy="11.5" r="1.6" fill="#afb1b3"/></svg>
<svg style="left:1656px;top:101px" width="14" height="14"><path d="M1 4L7 1.5L13 4V11L7 13.5L1 11Z" fill="#f4c63a"/><path d="M7 6.5V13.5L13 11V4Z" fill="#5b2b9c"/><path d="M1 4L7 6.5L13 4" fill="none" stroke="#e0507a" stroke-width="1"/><path d="M2.5 5.5V10.5L4.5 8L6 10.5V5.5" fill="none" stroke="#6b4b17" stroke-width="0.9"/></svg>
<div class="t" style="left:1667px;top:120px;font-size:12.4px;transform:rotate(90deg);transform-origin:0 0">PlantUML</div>
<div class="t" style="left:1667px;top:198px;font-size:12.5px;transform:rotate(90deg);transform-origin:0 0">Context Actions</div>

<!-- BOTTOM -->
<div class="a" style="left:1px;top:915px;width:1672px;height:1px;background:#323232"></div>
<div class="a" style="left:1px;top:937px;width:1672px;height:1px;background:#323232"></div>
<svg style="left:34px;top:921px" width="10" height="13"><circle cx="2" cy="2" r="1.5" fill="#afb1b3"/><circle cx="2" cy="11" r="1.5" fill="#afb1b3"/><circle cx="8" cy="3" r="1.5" fill="#afb1b3"/><path d="M2 2V11M8 3C8 7 2 6 2 10" fill="none" stroke="#afb1b3" stroke-width="1.3"/></svg>
<div class="t" style="left:49px;top:921px;font-size:13px">Git</div>
<svg style="left:85px;top:921px" width="11" height="11"><rect x="0" y="0" width="11" height="11" fill="#afb1b3"/><path d="M2.5 2.5L5 5L2.5 7.5M5.5 8.3H8.5" fill="none" stroke="#3c3f41" stroke-width="1.2"/></svg>
<div class="t" style="left:101px;top:921px;font-size:13px">Terminal</div>
<svg style="left:172px;top:921px" width="11" height="11"><rect x="0" y="0" width="11" height="11" fill="#afb1b3"/><path d="M2.5 2.5L5 5L2.5 7.5M5.5 8.3H8.5" fill="none" stroke="#3c3f41" stroke-width="1.2"/></svg>
<div class="t" style="left:188px;top:921px;font-size:13px;letter-spacing:-0.5px">Console</div>
<svg style="left:254px;top:921px" width="12" height="12"><circle cx="5" cy="5" r="3.8" fill="none" stroke="#afb1b3" stroke-width="1.6"/><path d="M7.8 7.8L11.2 11.2" stroke="#afb1b3" stroke-width="1.9"/></svg>
<div class="t" style="left:270px;top:921px;font-size:13px;letter-spacing:-0.6px">Usages</div>
<svg style="left:334px;top:922px" width="11" height="10"><path d="M0 1H11M0 4H6.5M0 7H11" stroke="#afb1b3" stroke-width="1.4"/></svg>
<div class="t" style="left:350px;top:921px;font-size:13px;letter-spacing:-0.5px">Messages</div>
<svg style="left:1476px;top:920px" width="14" height="14"><path d="M13 13H7A6 6 0 1 1 13 7Z" fill="none" stroke="#afb1b3" stroke-width="1.3"/></svg>
<div class="t" style="left:1493px;top:921px;font-size:13px;letter-spacing:-0.4px">Event Log</div>
<svg style="left:1571px;top:920px" width="12" height="14"><path d="M2.5 1.5C2.5 0.8 3 0.5 4 0.5H8C9 0.5 9.5 0.8 9.5 1.5V4L11.5 5.5V9L9.5 10.5V12.5H2.5V10.5L0.5 9V5.5L2.5 4Z" fill="#afb1b3"/></svg>
<div class="t" style="left:1587px;top:921px;font-size:13px;letter-spacing:0.1px">Inspector</div>
<!-- STATUS -->
<svg style="left:7px;top:945px" width="12" height="13"><rect x="3.5" y="0.5" width="8" height="8" fill="none" stroke="#afb1b3" stroke-width="1.2"/><path d="M1 3V11.5H9.5" fill="none" stroke="#afb1b3" stroke-width="1.2"/></svg>
<div class="a" style="left:1351px;top:938px;width:10px;height:25px;background:#5b5e60"></div>
<div class="t" style="left:1358px;top:944px;font-size:14.5px;letter-spacing:-0.05px">646 of 6961</div>
<svg style="left:1445px;top:945px" width="15" height="14"><rect x="0" y="0" width="7" height="7" fill="#3592b0"/><rect x="7" y="2" width="7" height="7" fill="#c09034"/><rect x="2" y="7" width="7" height="7" fill="#8f7bbf"/>
<path d="M1.8 1.3V5.7H3.3C4.8 5.7 5.3 4.8 5.3 3.5C5.3 2.2 4.8 1.3 3.3 1.3Z" fill="none" stroke="#1f3540" stroke-width="0.9"/>
<path d="M9.3 3.3V7.6H12.2" fill="none" stroke="#3a2a10" stroke-width="0.9"/>
<path d="M7 8.5C6.5 8.2 6 8.1 5.5 8.1C4.7 8.1 4.2 8.5 4.2 9.1C4.2 10.4 7 9.8 7 11.3C7 12 6.4 12.4 5.5 12.4C4.9 12.4 4.3 12.2 4 11.9" fill="none" stroke="#2d283a" stroke-width="0.9"/></svg>
<div class="a" style="left:1463px;top:938px;width:1px;height:25px;background:#555555"></div>
<svg style="left:1472px;top:944px" width="10" height="14"><circle cx="2" cy="2" r="1.5" fill="#afb1b3"/><circle cx="2" cy="12" r="1.5" fill="#afb1b3"/><circle cx="8" cy="3" r="1.5" fill="#afb1b3"/><path d="M2 2V12M8 3C8 7 2 7 2 11" fill="none" stroke="#afb1b3" stroke-width="1.4"/></svg>
<div class="t" style="left:1487px;top:944px;font-size:15px;letter-spacing:0.28px">development</div>
<div class="a" style="left:1593px;top:944px;width:14px;height:14px;background:#8b78b7;border-radius:2px"></div>
<svg style="left:1593px;top:944px" width="14" height="14"><path d="M4 4H10M7 4V11" stroke="#2d283a" stroke-width="1.4"/></svg>
<div class="t" style="left:1608px;top:946px;font-size:11.5px;letter-spacing:0px">:ON</div>
<svg style="left:1649px;top:945px" width="13" height="13"><circle cx="6.5" cy="6.5" r="6.2" fill="#d2524c"/><rect x="5.6" y="2.6" width="1.8" height="5" fill="#3c3f41"/><rect x="5.6" y="8.7" width="1.8" height="1.8" fill="#3c3f41"/></svg>
</body></html>
